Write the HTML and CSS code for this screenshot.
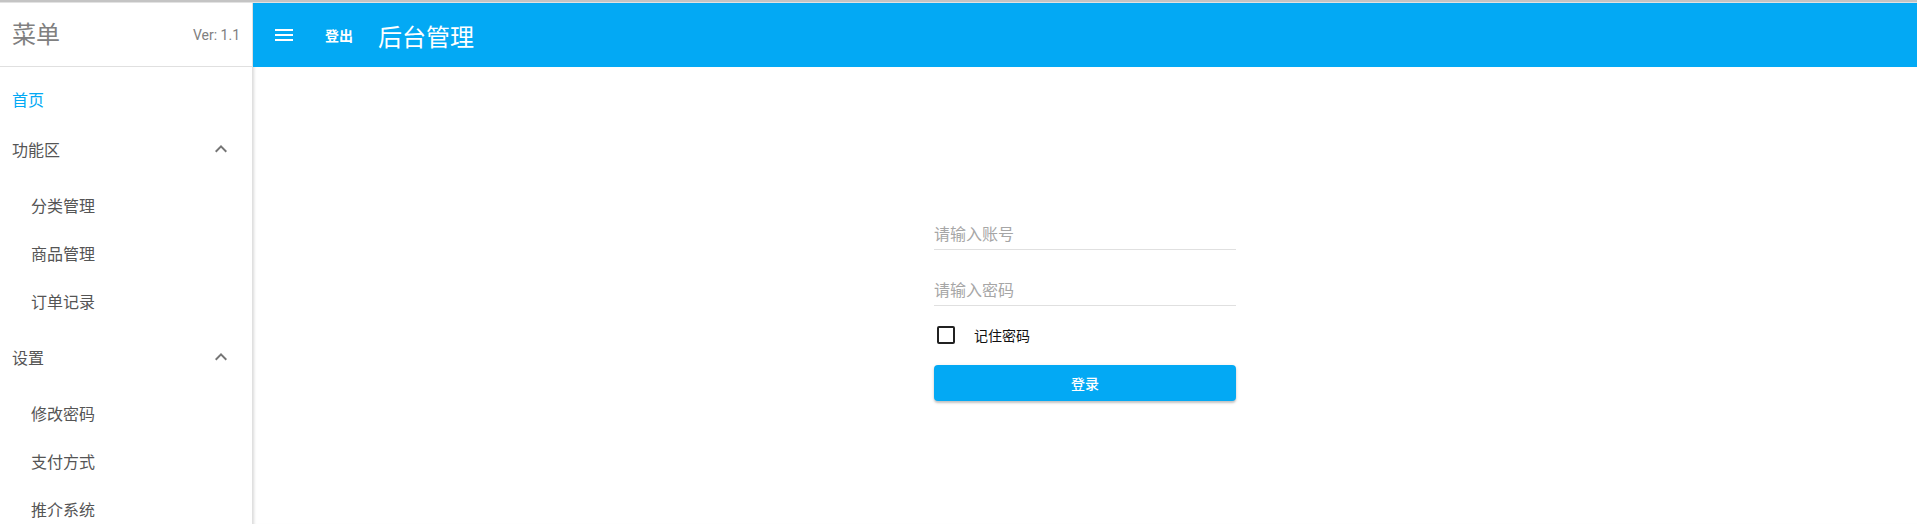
FILE: index.html
```html
<!DOCTYPE html>
<html lang="zh-CN">
<head>
<meta charset="utf-8">
<title>后台管理</title>
<link rel="stylesheet" href="styles.css">
</head>
<body>
<div class="topline"></div>
<div class="app">
  <aside class="sidebar">
    <div class="side-head">
      <span class="side-title">菜单</span>
      <span class="version">Ver: 1.1</span>
    </div>
    <nav class="nav">
      <div class="item active">首页</div>
      <div class="group">
        <span>功能区</span>
        <svg class="chev" viewBox="0 0 24 24" width="24" height="24"><path d="M12 8l-6 6 1.41 1.41L12 10.83l4.59 4.58L18 14z"/></svg>
      </div>
      <div class="sub">
        <div class="item subitem">分类管理</div>
        <div class="item subitem">商品管理</div>
        <div class="item subitem">订单记录</div>
      </div>
      <div class="group">
        <span>设置</span>
        <svg class="chev" viewBox="0 0 24 24" width="24" height="24"><path d="M12 8l-6 6 1.41 1.41L12 10.83l4.59 4.58L18 14z"/></svg>
      </div>
      <div class="sub">
        <div class="item subitem">修改密码</div>
        <div class="item subitem">支付方式</div>
        <div class="item subitem">推介系统</div>
      </div>
    </nav>
  </aside>
  <main class="main">
    <header class="topbar">
      <svg class="menu-icon" viewBox="0 0 24 24" width="24" height="24"><path d="M3 18h18v-2H3v2zm0-5h18v-2H3v2zm0-7v2h18V6H3z"/></svg>
      <span class="logout">登出</span>
      <span class="title">后台管理</span>
    </header>
    <section class="content">
      <form class="login">
        <input class="field" type="text" placeholder="请输入账号">
        <input class="field field2" type="password" placeholder="请输入密码">
        <label class="remember"><span class="box"></span><span class="remember-text">记住密码</span></label>
        <button type="button" class="btn">登录</button>
      </form>
    </section>
  </main>
</div>
</body>
</html>
```

FILE: styles.css
```css
* { box-sizing: border-box; }
html, body { margin: 0; padding: 0; }
body {
  font-family: Roboto, "Noto Sans CJK SC", sans-serif;
  background: #fff;
  height: 100vh;
  overflow: hidden;
}
.topline {
  height: 3px;
  background: linear-gradient(#c4c4c4 0, #c4c4c4 2px, #e2e2e2 2px);
}
.app {
  display: flex;
  height: calc(100vh - 3px);
}
.sidebar {
  width: 253px;
  flex: none;
  border-right: 1px solid #e0e0e0;
  overflow: hidden;
}
.side-head {
  height: 64px;
  border-bottom: 1px solid #e0e0e0;
  display: flex;
  align-items: center;
  justify-content: space-between;
  padding: 0 12px 0 12px;
  color: #808080;
}
.side-title { font-size: 24px; line-height: 30px; }
.version { font-size: 14px; line-height: 20px; }
.nav { padding-top: 8px; }
.item {
  height: 48px;
  display: flex;
  align-items: center;
  padding-left: 12px;
  font-size: 16px;
  color: #555;
}
.item.active { color: #03a9f4; }
.group {
  height: 52px;
  display: flex;
  align-items: center;
  justify-content: space-between;
  padding: 0 19px 0 12px;
  font-size: 16px;
  color: #555;
}
.chev { fill: #757575; display: block; }
.sub { padding: 6px 0 6px; }
.subitem { padding-left: 31px; }
.main {
  flex: 1;
  display: flex;
  flex-direction: column;
  min-width: 0;
}
.topbar {
  height: 64px;
  flex: none;
  background: #03a9f4;
  color: #fff;
  display: flex;
  align-items: center;
  padding-left: 19px;
}
.menu-icon { fill: #fff; display: block; }
.logout {
  margin-left: 29px;
  font-size: 14px;
  font-weight: 700;
}
.title {
  margin-left: 25px;
  font-size: 24px;
}
.content {
  flex: 1;
  display: flex;
  justify-content: center;
  box-shadow: inset 3px 0 3px -2px rgba(0,0,0,0.15);
}
.login {
  width: 302px;
  padding-top: 149px;
  display: flex;
  flex-direction: column;
}
.field {
  height: 34px;
  border: none;
  border-bottom: 1px solid #e0e0e0;
  padding: 3px 0 0;
  font-family: inherit;
  font-size: 16px;
  color: #333;
  outline: none;
  background: transparent;
}
.field::placeholder { color: #a6a6a6; }
.field2 { margin-top: 22px; }
.remember {
  height: 24px;
  margin-top: 17px;
  display: flex;
  align-items: center;
  padding-left: 3px;
}
.box {
  width: 18px;
  height: 18px;
  border: 2px solid #212121;
  border-radius: 2px;
}
.remember-text {
  margin-left: 19px;
  font-size: 14px;
  color: #111;
}
.btn {
  margin-top: 18px;
  height: 36px;
  border: none;
  border-radius: 4px;
  background: #03a9f4;
  color: #fff;
  font-family: inherit;
  font-size: 14px;
  font-weight: 500;
  box-shadow: 0 2px 2px rgba(0,0,0,0.18), 0 1px 4px rgba(0,0,0,0.1);
}
```
